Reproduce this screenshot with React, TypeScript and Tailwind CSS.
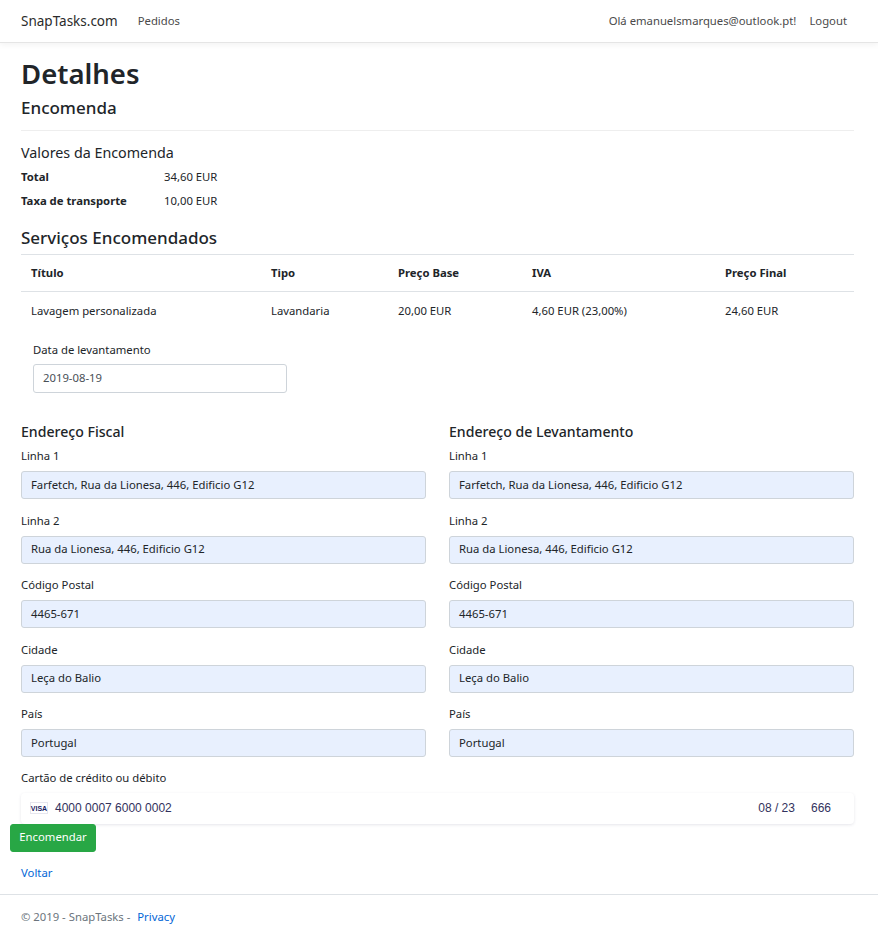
const FONT = 'font-["Noto_Sans",sans-serif]'

const ADDRESS_FIELDS = [
  { label: 'Linha 1', value: 'Farfetch, Rua da Lionesa, 446, Edificio G12' },
  { label: 'Linha 2', value: 'Rua da Lionesa, 446, Edificio G12' },
  { label: 'Código Postal', value: '4465-671' },
  { label: 'Cidade', value: 'Leça do Balio' },
  { label: 'País', value: 'Portugal' },
]

const COLUMNS = [
  { title: 'Título', value: 'Lavagem personalizada', width: 'w-[240px]' },
  { title: 'Tipo', value: 'Lavandaria', width: 'w-[127px]' },
  { title: 'Preço Base', value: '20,00 EUR', width: 'w-[134px]' },
  { title: 'IVA', value: '4,60 EUR (23,00%)', width: 'w-[193px]' },
  { title: 'Preço Final', value: '24,60 EUR', width: 'flex-1' },
]

function VisaIcon() {
  return (
    <svg width="18" height="12" viewBox="0 0 18 12" className="shrink-0">
      <rect x="0.5" y="0.5" width="17" height="11" fill="#fff" stroke="#e6e6ee" />
      <text x="9" y="8.6" textAnchor="middle" fontSize="7" fontWeight="700" fontFamily="Liberation Sans" fill="#1a2263">
        VISA
      </text>
    </svg>
  )
}

function Address({ title }: { title: string }) {
  return (
    <div className="w-[405px]">
      <h4 className="text-[14.1px] leading-[19px] font-medium mb-[5px]">{title}</h4>
      {ADDRESS_FIELDS.map((field) => (
        <div key={field.label} className="mb-[11.5px]">
          <div className="leading-[20px] mb-[5px]">{field.label}</div>
          <div className="h-[28px] bg-[#e8f0fe] border border-[#ced4da] rounded-[3px] px-[9px] flex items-center text-[#212529]">
            {field.value}
          </div>
        </div>
      ))}
    </div>
  )
}

export default function App() {
  return (
    <div className={`${FONT} bg-white text-[#212529] text-[11.3px] w-[878px] h-[929px] overflow-hidden flex flex-col`}>
      <nav className="h-[43px] shrink-0 border-b border-[#e5e5e5] shadow-[0_2px_6px_rgba(0,0,0,0.05)] pl-[21px] pr-[21px] flex items-center justify-between">
        <div className="flex items-center gap-[20px]">
          <span className="text-[13.5px] text-[#2b2b2b]">SnapTasks.com</span>
          <span className="text-[#4a4a4a]">Pedidos</span>
        </div>
        <div className="flex items-center gap-[13px] pr-[10px] text-[#4a4a4a]">
          <span>Olá emanuelsmarques@outlook.pt!</span>
          <span>Logout</span>
        </div>
      </nav>

      <main className="flex-1 w-[875px] px-[21px]">
        <h1 className="text-[27.5px] leading-[35px] font-semibold mt-[13px]">Detalhes</h1>
        <h2 className="text-[17px] leading-[21px] font-medium mt-[6px]">Encomenda</h2>
        <hr className="border-[#eeeeee] mt-[12px]" />
        <h4 className="text-[14.3px] leading-[19px] mt-[12px]">Valores da Encomenda</h4>
        <div className="flex mt-[6px] leading-[18px]">
          <b className="w-[143px] font-bold">Total</b>
          <span>34,60 EUR</span>
        </div>
        <div className="flex mt-[6px] leading-[18px]">
          <b className="w-[143px] font-bold">Taxa de transporte</b>
          <span>10,00 EUR</span>
        </div>
        <h3 className="text-[17px] leading-[21px] font-medium mt-[17px]">Serviços Encomendados</h3>

        <div className="mt-[6px] border-t border-[#dee2e6]">
          <div className="flex h-[37px] items-center border-b border-[#dee2e6] pl-[10px] pr-[9px] font-bold">
            {COLUMNS.map((col) => (
              <div key={col.title} className={col.width}>
                {col.title}
              </div>
            ))}
          </div>
          <div className="flex h-[38px] items-center pl-[10px] pr-[9px]">
            {COLUMNS.map((col) => (
              <div key={col.title} className={col.width}>
                {col.value}
              </div>
            ))}
          </div>
        </div>

        <div className="ml-[12px] mt-[11px] leading-[18px]">Data de levantamento</div>
        <div className="ml-[12px] mt-[5px] w-[254px] h-[29px] border border-[#ced4da] rounded-[3px] px-[9px] flex items-center text-[#495057]">
          2019-08-19
        </div>

        <div className="flex justify-between mt-[29px]">
          <Address title="Endereço Fiscal" />
          <Address title="Endereço de Levantamento" />
        </div>

        <div className="leading-[18px]">Cartão de crédito ou débito</div>
        <div className="mt-[6px] h-[31px] rounded-[4px] shadow-[0_1px_3px_rgba(50,50,93,0.12)] flex items-center pl-[9px] pr-[23px] font-['Liberation_Sans',sans-serif] text-[12px] text-[#32325d]">
          <VisaIcon />
          <span className="ml-[7px]">4000 0007 6000 0002</span>
          <span className="ml-auto">08 / 23</span>
          <span className="ml-[16px]">666</span>
        </div>
        <button className="-ml-[11px] h-[28px] w-[86px] bg-[#28a745] border border-[#28a745] rounded-[3px] text-white block">
          Encomendar
        </button>
        <a className="block mt-[12px] leading-[18px] text-[#0366d6]" href="#">
          Voltar
        </a>
      </main>

      <footer className="h-[35px] shrink-0 border-t border-[#dee2e6] px-[21px] pt-[13px] leading-[18px] text-[#6c757d]">
        © 2019 - SnapTasks - <a className="ml-[4px] text-[#0366d6]" href="#">Privacy</a>
      </footer>
    </div>
  )
}
